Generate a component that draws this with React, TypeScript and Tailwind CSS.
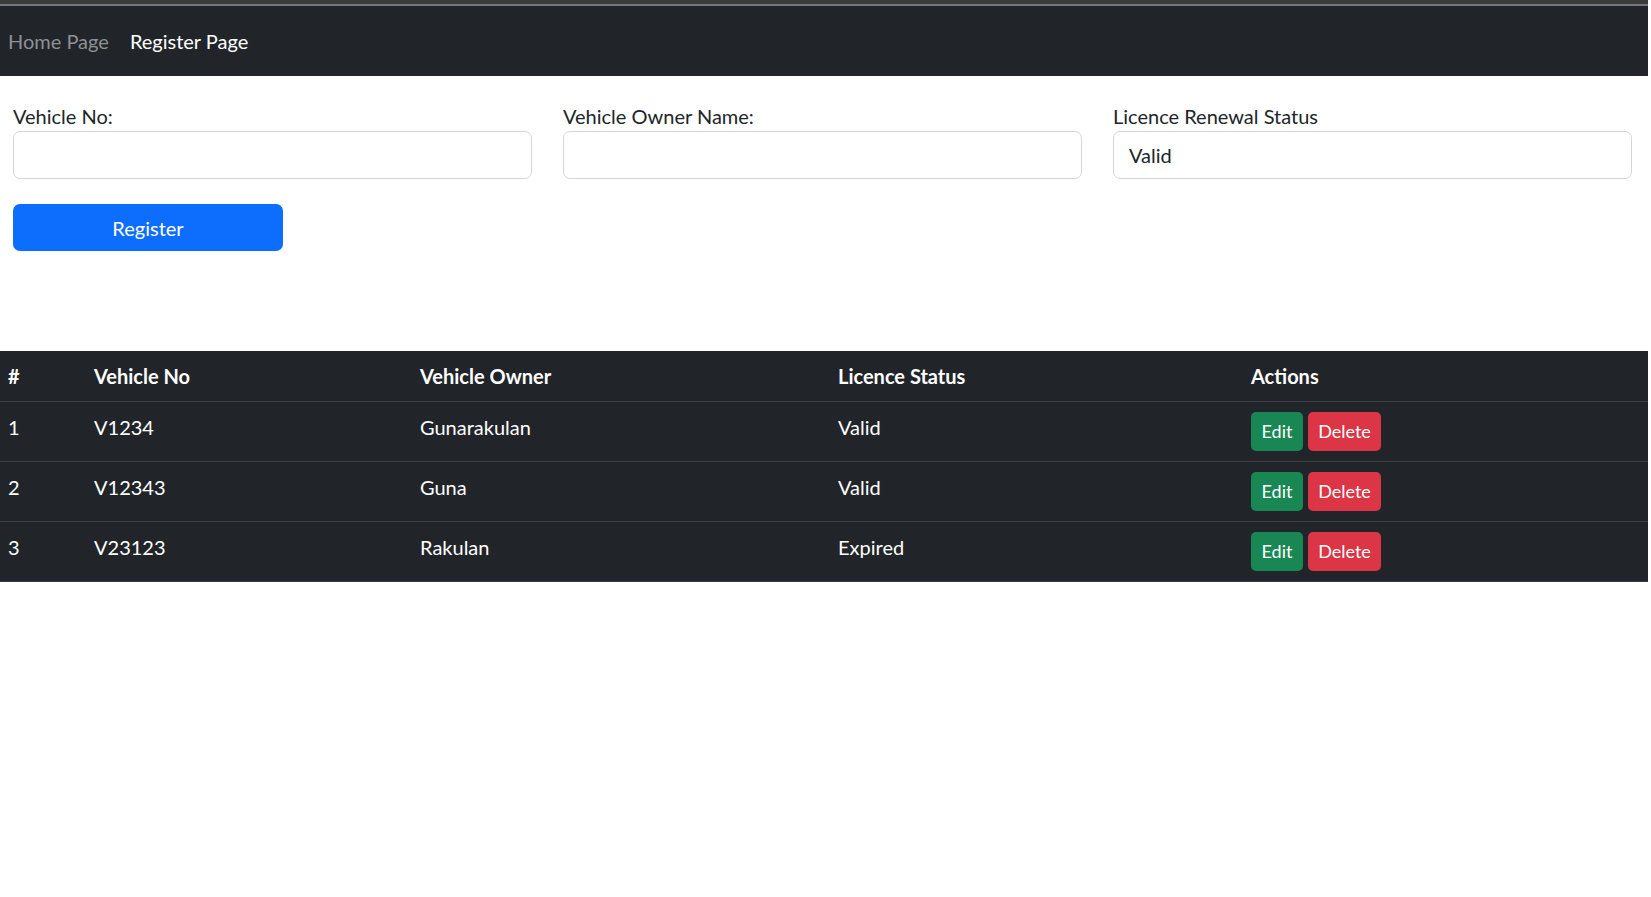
import React from "react";

const rows = [
  { id: 1, no: "V1234", owner: "Gunarakulan", status: "Valid" },
  { id: 2, no: "V12343", owner: "Guna", status: "Valid" },
  { id: 3, no: "V23123", owner: "Rakulan", status: "Expired" },
];

function Field({ label, value }: { label: string; value?: string }) {
  return (
    <div className="flex flex-col w-[519px]">
      <label className="text-[20px] leading-[26px] mb-[2px] text-[#212529]">{label}</label>
      <div className="h-[48px] border border-[#d3d6d9] rounded-[7px] px-[15px] flex items-center text-[20px] text-[#212529]">
        {value}
      </div>
    </div>
  );
}

export default function App() {
  return (
    <div className="w-[1648px] min-h-[897px] bg-white font-['Lato','Liberation_Sans',sans-serif]">
      {/* browser chrome strip */}
      <div className="h-[4px] bg-[#3a3a3a]" />
      <div className="h-[2px] bg-[#777]" />

      {/* navbar */}
      <nav className="h-[70px] bg-[#212529] flex items-center pl-[8px] gap-[21px] text-[20px]">
        <span className="text-[#8e9194]">Home Page</span>
        <span className="text-white">Register Page</span>
      </nav>

      {/* form */}
      <div className="pt-[27px] pl-[13px]">
        <div className="flex gap-[31px]">
          <Field label="Vehicle No:" />
          <Field label="Vehicle Owner Name:" />
          <Field label="Licence Renewal Status" value="Valid" />
        </div>
        <button className="mt-[25px] w-[270px] h-[47px] rounded-[7px] bg-[#0d6efd] text-white text-[20px]">
          Register
        </button>
      </div>

      {/* table */}
      <table className="mt-[100px] w-full table-fixed bg-[#212529] text-white text-[20px]">
        <thead>
          <tr className="border-b border-[#3a3e42]">
            <th className="w-[84px] pl-[8px] pr-[10px] py-[10px] leading-[30px] text-left font-bold align-top">#</th>
            <th className="w-[326px] px-[10px] py-[10px] leading-[30px] text-left font-bold align-top">Vehicle No</th>
            <th className="w-[418px] px-[10px] py-[10px] leading-[30px] text-left font-bold align-top">Vehicle Owner</th>
            <th className="w-[413px] px-[10px] py-[10px] leading-[30px] text-left font-bold align-top">Licence Status</th>
            <th className="px-[10px] py-[10px] leading-[30px] text-left font-bold align-top">Actions</th>
          </tr>
        </thead>
        <tbody>
          {rows.map((r) => (
            <tr key={r.id} className="border-b border-[#3a3e42] h-[60px]">
              <td className="pl-[8px] pt-[10px] leading-[30px] align-top">{r.id}</td>
              <td className="px-[10px] pt-[10px] leading-[30px] align-top">{r.no}</td>
              <td className="px-[10px] pt-[10px] leading-[30px] align-top">{r.owner}</td>
              <td className="px-[10px] pt-[10px] leading-[30px] align-top">{r.status}</td>
              <td className="px-[10px] pt-[10px] align-top">
                <div className="flex gap-[5px]">
                  <button className="w-[52px] h-[39px] rounded-[5px] bg-[#198754] text-white text-[18px]">Edit</button>
                  <button className="w-[73px] h-[39px] rounded-[5px] bg-[#dc3545] text-white text-[18px]">Delete</button>
                </div>
              </td>
            </tr>
          ))}
        </tbody>
      </table>
    </div>
  );
}
